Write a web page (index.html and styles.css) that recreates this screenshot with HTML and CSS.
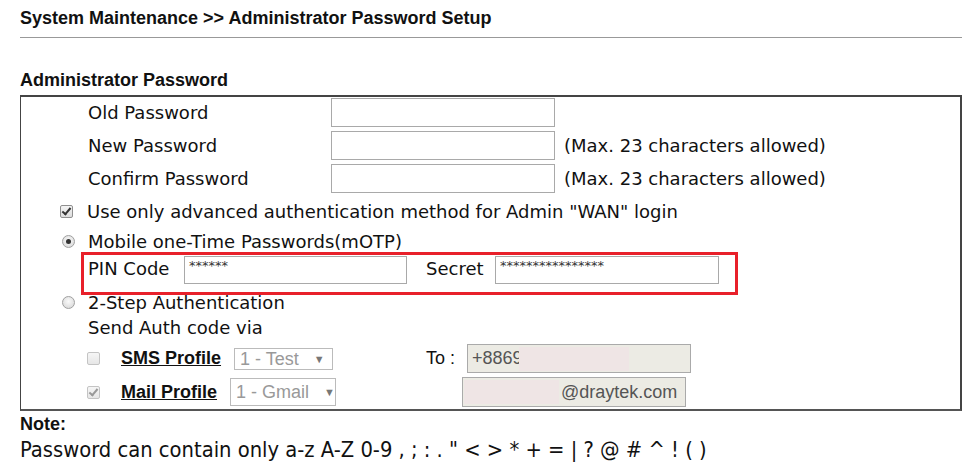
FILE: index.html
```html
<!DOCTYPE html>
<html lang="en">

<head>
    <meta charset="UTF-8">
    <title>Administrator Password Setup</title>
    <link rel="stylesheet" href="styles.css">
</head>

<body>
    <h1 class="page-title">System Maintenance &gt;&gt; Administrator Password Setup</h1>
    <hr class="title-rule">

    <h2 class="section-title">Administrator Password</h2>

    <div class="box">
        <div class="pw-row">
            <span class="label">Old Password</span>
            <span class="field"></span>
        </div>
        <div class="pw-row">
            <span class="label">New Password</span>
            <span class="field"></span>
            <span class="hint">(Max. 23 characters allowed)</span>
        </div>
        <div class="pw-row">
            <span class="label">Confirm Password</span>
            <span class="field"></span>
            <span class="hint">(Max. 23 characters allowed)</span>
        </div>

        <div class="opt-row check-row">
            <span class="check checked"></span>
            <span>Use only advanced authentication method for Admin "WAN" login</span>
        </div>
        <div class="opt-row radio-row">
            <span class="radio checked"></span>
            <span>Mobile one-Time Passwords(mOTP)</span>
        </div>

        <div class="motp">
            <span class="motp-label">PIN Code</span>
            <span class="field small-field pin-field">******</span>
            <span class="motp-label secret-label">Secret</span>
            <span class="field small-field">****************</span>
        </div>

        <div class="opt-row step-row">
            <span class="radio"></span>
            <span>2-Step Authentication</span>
        </div>
        <div class="send-row">Send Auth code via</div>

        <div class="profile-row sms-row">
            <span class="check disabled"></span>
            <a class="profile-link">SMS Profile</a>
            <span class="dropdown sms-drop">1 - Test <i>&#9660;</i></span>
            <span class="to-label">To :</span>
            <span class="grey-field sms-to"><span>+8869</span><span class="blur blur-sms"></span></span>
        </div>
        <div class="profile-row mail-row">
            <span class="check disabled checked"></span>
            <a class="profile-link">Mail Profile</a>
            <span class="dropdown mail-drop">1 - Gmail <i>&#9660;</i></span>
            <span class="grey-field mail-to"><span class="blur blur-mail"></span>@draytek.com</span>
        </div>
    </div>

    <div class="note-title">Note:</div>
    <div class="note-text">Password can contain only a-z A-Z 0-9 , ; : . " &lt; &gt; * + = | ? @ # ^ ! ( )</div>
</body>

</html>
```

FILE: styles.css
```css
html {
    font-family: "DejaVu Sans", Verdana, sans-serif;
    font-size: 18px;
    color: #111;
}

body {
    margin: 0;
    padding: 0 14px 0 20px;
}

.page-title {
    font-family: "Liberation Sans", Arial, sans-serif;
    font-size: 18px;
    font-weight: bold;
    margin: 0;
    padding-top: 8px;
    line-height: 20px;
}

.title-rule {
    border: 0;
    border-top: 1px solid #999;
    margin: 9px 0 0;
}

.section-title {
    font-family: "Liberation Sans", Arial, sans-serif;
    font-size: 18px;
    font-weight: bold;
    margin: 32px 0 0;
    line-height: 20px;
}

/* the outlined panel */
.box {
    margin-top: 5px;
    border: 2px solid #444;
    border-left-width: 1px;
    border-bottom-color: #555;
    padding: 1px 0 2px 0;
}

.pw-row {
    display: flex;
    align-items: center;
    height: 29px;
    margin-bottom: 4px;
}

.pw-row:nth-child(3) {
    margin-bottom: 0;
}

.label {
    width: 243px;
    padding-left: 67px;
}

.field {
    display: inline-block;
    box-sizing: border-box;
    width: 224px;
    height: 29px;
    border: 1px solid #a9a9a9;
    background: #fff;
}

.hint {
    margin-left: 9px;
}

.opt-row {
    display: flex;
    align-items: center;
}

.check-row {
    height: 37px;
    padding-left: 39px;
}

.check-row .check {
    margin-right: 14px;
}

.radio-row {
    height: 22px;
    padding-left: 41px;
}

.radio {
    margin-right: 13px;
}

/* red highlight around mOTP inputs */
.motp {
    display: flex;
    align-items: flex-start;
    margin-left: 60px;
    width: 647px;
    height: 37px;
    border: 3px solid #e8202a;
    padding-left: 4px;
}

.motp-label {
    width: 96px;
    line-height: 27px;
}

.secret-label {
    box-sizing: border-box;
    width: 88px;
    padding-left: 19px;
}

.small-field {
    height: 28px;
    margin-top: 1px;
    font-size: 13px;
    color: #333;
    padding: 3px 0 0 4px;
    line-height: 12px;
}

.pin-field {
    width: 223px;
}

.step-row {
    height: 15px;
    padding-left: 41px;
}

.send-row {
    height: 34px;
    line-height: 36px;
    padding-left: 67px;
}

.profile-row {
    display: flex;
    align-items: center;
    padding-left: 66px;
    font-family: "Liberation Sans", Arial, sans-serif;
}

.sms-row {
    height: 29px;
    margin-bottom: 4px;
}

.mail-row {
    height: 30px;
}

.profile-link {
    font-weight: bold;
    text-decoration: underline;
    color: #111;
    margin-left: 21px;
}

.dropdown {
    display: inline-block;
    box-sizing: border-box;
    height: 22px;
    line-height: 20px;
    border: 1px solid #bbb;
    color: #999;
    padding-left: 5px;
    white-space: nowrap;
}

.dropdown i {
    font-style: normal;
    font-size: 11px;
    color: #777;
    vertical-align: 2px;
    margin-left: 10px;
}

.sms-drop {
    width: 99px;
    margin-left: 13px;
}

.mail-drop {
    width: 106px;
    height: 28px;
    line-height: 26px;
    margin-left: 13px;
}

.to-label {
    margin-left: 93px;
    width: 41px;
}

.grey-field {
    display: inline-flex;
    align-items: center;
    box-sizing: border-box;
    width: 224px;
    height: 29px;
    background: #ecebe4;
    border: 1px solid #aaa;
    color: #555;
    padding-left: 4px;
    white-space: nowrap;
}

/* pink patch hides the rest of the number / address */
.blur {
    display: inline-block;
    height: 24px;
    background: #efe5e5;
}

.blur-sms {
    width: 110px;
    margin-left: -4px;
}

.blur-mail {
    width: 95px;
    margin-left: -3px;
    margin-right: 2px;
}

.mail-to {
    width: 224px;
    height: 30px;
    margin-left: 126px;
}

/* drawn form controls */
.check {
    display: inline-block;
    box-sizing: border-box;
    width: 13px;
    height: 13px;
    border: 1px solid #8f8f8f;
    border-radius: 2px;
    background: linear-gradient(#f4f4f4, #dcdcdc);
    position: relative;
}

.check.checked::after {
    content: "";
    position: absolute;
    left: 3px;
    top: 0px;
    width: 3px;
    height: 7px;
    border: solid #333;
    border-width: 0 2px 2px 0;
    transform: rotate(40deg);
}

.check.disabled {
    border-color: #c4c4c4;
    background: linear-gradient(#f6f6f6, #e6e6e6);
}

.check.disabled.checked::after {
    border-color: #999;
}

.radio {
    display: inline-block;
    box-sizing: border-box;
    width: 13px;
    height: 13px;
    border: 1px solid #a0a0a0;
    border-radius: 50%;
    background: radial-gradient(circle at 50% 40%, #fafafa, #d4d4d4);
    position: relative;
}

.radio.checked::after {
    content: "";
    position: absolute;
    left: 3px;
    top: 3px;
    width: 5px;
    height: 5px;
    border-radius: 50%;
    background: #333;
}

.note-title {
    font-family: "Liberation Sans", Arial, sans-serif;
    font-weight: bold;
    font-size: 18px;
    margin-top: 3px;
    line-height: 20px;
}

.note-text {
    font-family: "DejaVu Sans Condensed", "DejaVu Sans", sans-serif;
    font-stretch: condensed;
    font-size: 21.75px;
    margin-top: 3px;
}
```
